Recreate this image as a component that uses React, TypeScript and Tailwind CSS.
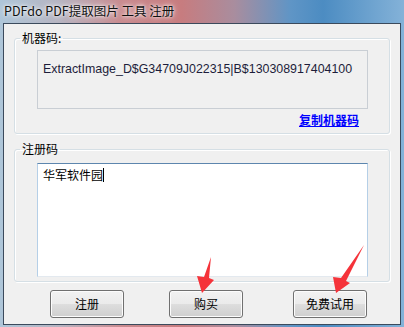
import React from "react";

const cjk = "font-['Noto_Sans_CJK_SC','Noto_Sans',sans-serif]";

function Btn({ label, className = "" }: { label: string; className?: string }) {
  return (
    <div
      className={`w-[74px] h-[28px] rounded-[3px] border border-[#707070] bg-[linear-gradient(#f2f2f2_0%,#ebebeb_48%,#dddddd_52%,#cfcfcf_100%)] shadow-[inset_0_0_0_1px_#fcfcfc] flex items-center justify-center text-[12px] text-black ${cjk} ${className}`}
    >
      {label}
    </div>
  );
}

function Arrows() {
  return (
    <svg className="absolute left-0 top-0" width="404" height="327" viewBox="0 0 404 327">
      <polygon points="211,257 209,278 214,280 202,293 197,276 204,277" fill="#f5333a" />
      <polygon points="364,245 346,281 350,283 336,293 333,277 341,278" fill="#f5333a" />
    </svg>
  );
}

export default function App() {
  return (
    <div className="relative w-[404px] h-[327px] overflow-hidden bg-[linear-gradient(90deg,#aec6d9_0%,#b6b3c0_15%,#c98b8f_30%,#c77c7f_45%,#a98d9e_58%,#5f95c6_72%,#4c8cc2_80%,#84b2d8_100%)]">
      <div className="h-[23px] px-[4px] flex items-center">
        <span className={`text-[12.5px] text-[#111] leading-none ${cjk} [text-shadow:0_0_6px_#fff,0_0_3px_#fff]`}>
          PDFdo PDF提取图片 工具 注册
        </span>
      </div>
      <div className="mx-[3px] h-[302px] border border-[#3b4a5c] bg-[#f0f0f0] pl-[10px] flex flex-col">
        <fieldset className="mt-[7px] w-[376px] border border-[#d5dfe5] rounded-[3px] shadow-[inset_1px_1px_0_#fff,1px_1px_0_#fff] p-0 pb-[6px]">
          <legend className={`ml-[5px] px-[2px] text-[12px] leading-[14px] text-black ${cjk}`}>机器码:</legend>
          <div className="pl-[22px] pt-[5px]">
            <div className="w-[331px] h-[59px] border border-[#c9ced4] bg-[#f0f0f0] px-[5px] pt-[4px]">
              <span className="font-['Liberation_Sans',Arial,sans-serif] text-[12.4px] leading-[14px] text-[#1d1d3a]">
                ExtractImage_D$G34709J022315|B$130308917404100
              </span>
            </div>
            <div className="w-[331px] mt-[4px] flex justify-end pr-[9px]">
              <span className={`text-[12px] leading-[14px] font-bold underline text-[#0000ff] ${cjk}`}>复制机器码</span>
            </div>
          </div>
        </fieldset>
        <fieldset className="mt-[8px] w-[376px] border border-[#d5dfe5] rounded-[3px] shadow-[inset_1px_1px_0_#fff,1px_1px_0_#fff] p-0 pb-[4px]">
          <legend className={`ml-[5px] px-[2px] text-[12px] leading-[14px] text-black ${cjk}`}>注册码</legend>
          <div className="pl-[22px] pt-[7px]">
            <div className="w-[331px] h-[114px] border border-[#b5cfe7] border-t-[#5d86ae] border-b-[#e3e9ef] bg-white px-[5px] pt-[4px] flex items-start">
              <span className={`text-[12px] leading-[14px] text-black ${cjk}`}>华军软件园</span>
              <span className="w-[1px] h-[14px] bg-black" />
            </div>
          </div>
        </fieldset>
        <div className="mt-[8px] flex">
          <Btn label="注册" className="ml-[36px]" />
          <Btn label="购买" className="ml-[45px]" />
          <Btn label="免费试用" className="ml-[50px]" />
        </div>
      </div>
      <Arrows />
    </div>
  );
}
